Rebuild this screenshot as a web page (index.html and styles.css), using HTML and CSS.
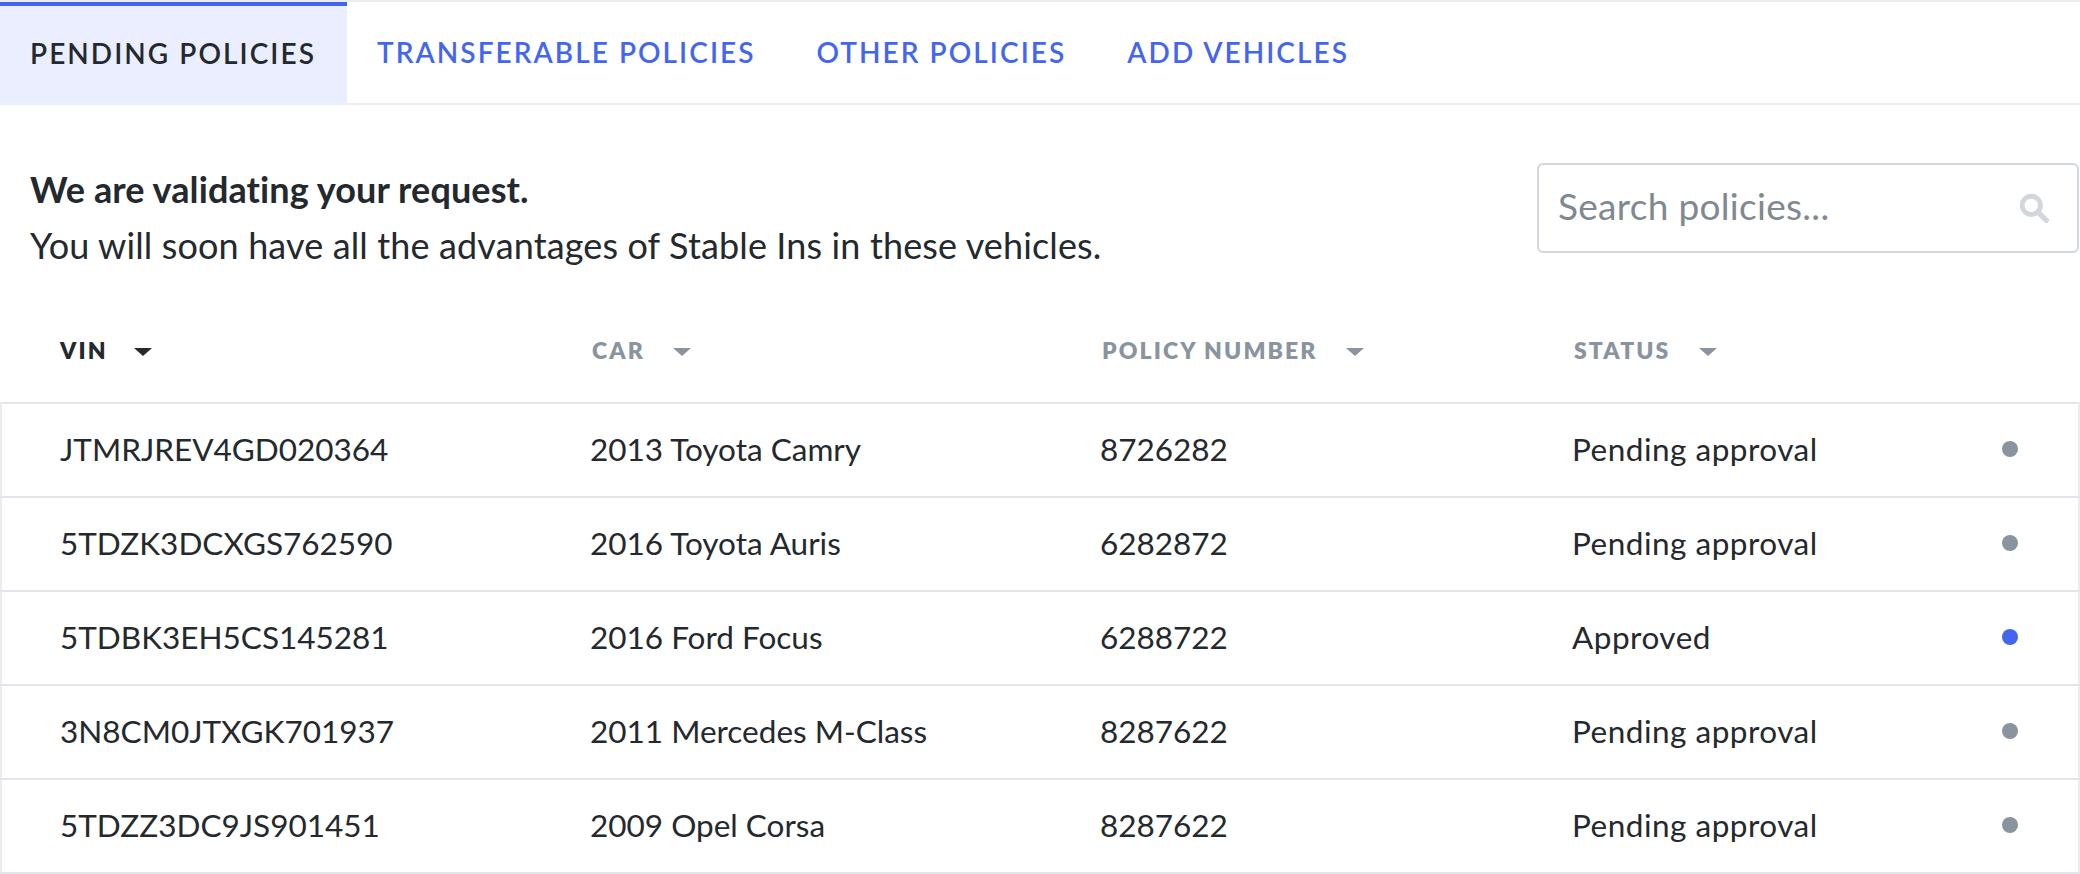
FILE: index.html
```html
<!DOCTYPE html>
<html lang="en">
<head>
  <meta charset="UTF-8" />
  <meta name="viewport" content="width=device-width, initial-scale=1.0" />
  <title>Pending Policies</title>
  <link rel="stylesheet" href="styles.css">
</head>
<body>
  <nav class="tabs">
    <a class="tab active" href="#">PENDING POLICIES</a>
    <a class="tab" href="#">TRANSFERABLE POLICIES</a>
    <a class="tab" href="#">OTHER POLICIES</a>
    <a class="tab" href="#">ADD VEHICLES</a>
  </nav>

  <section class="intro">
    <div class="intro-text">
      <h2>We are validating your request.</h2>
      <p>You will soon have all the advantages of Stable Ins in these vehicles.</p>
    </div>
    <div class="search">
      <span class="placeholder">Search policies...</span>
      <svg width="30" height="30" viewBox="0 0 28 28" fill="none" stroke="#d1d7dd">
        <circle cx="11.5" cy="11.5" r="8.5" stroke-width="4.5" />
        <path d="M18 18l7.5 7.5" stroke-width="5" stroke-linecap="round" />
      </svg>
    </div>
  </section>

  <table class="policies">
    <colgroup>
      <col class="col-vin">
      <col class="col-car">
      <col class="col-number">
      <col class="col-status">
      <col>
    </colgroup>
    <thead>
      <tr>
        <th class="sorted">VIN <span class="caret"></span></th>
        <th>CAR <span class="caret"></span></th>
        <th>POLICY NUMBER <span class="caret"></span></th>
        <th colspan="2">STATUS <span class="caret"></span></th>
      </tr>
    </thead>
    <tbody>
      <tr>
        <td>JTMRJREV4GD020364</td>
        <td>2013 Toyota Camry</td>
        <td>8726282</td>
        <td class="status">Pending approval</td>
        <td><span class="dot"></span></td>
      </tr>
      <tr>
        <td>5TDZK3DCXGS762590</td>
        <td>2016 Toyota Auris</td>
        <td>6282872</td>
        <td class="status">Pending approval</td>
        <td><span class="dot"></span></td>
      </tr>
      <tr>
        <td>5TDBK3EH5CS145281</td>
        <td>2016 Ford Focus</td>
        <td>6288722</td>
        <td class="status">Approved</td>
        <td><span class="dot approved"></span></td>
      </tr>
      <tr>
        <td>3N8CM0JTXGK701937</td>
        <td>2011 Mercedes M-Class</td>
        <td>8287622</td>
        <td class="status">Pending approval</td>
        <td><span class="dot"></span></td>
      </tr>
      <tr>
        <td>5TDZZ3DC9JS901451</td>
        <td>2009 Opel Corsa</td>
        <td>8287622</td>
        <td class="status">Pending approval</td>
        <td><span class="dot"></span></td>
      </tr>
    </tbody>
  </table>
</body>
</html>
```

FILE: styles.css
```css
body {
  margin: 0;
  font-family: Lato, "Liberation Sans", sans-serif;
  color: #24292e;
  background: white;
}
.tabs {
  display: flex;
  height: 101px;
  border-top: 2px solid #e9edf1;
  border-bottom: 2px solid #e9edf1;
}
.tab {
  display: flex;
  align-items: center;
  padding: 0 31px 5px 30px;
  font-size: 28px;
  font-weight: 600;
  letter-spacing: 2.05px;
  color: #4466ee;
  text-decoration: none;
  border-top: 4px solid transparent;
}
.tab.active {
  color: #24292e;
  background: #ebeefe;
  border-top-color: #4466ee;
  padding-right: 31px;
  margin-bottom: -2px;
}
.intro {
  display: flex;
  justify-content: space-between;
  align-items: flex-start;
  padding: 58px 1px 0 30px;
  height: 197px;
  box-sizing: border-box;
}
.intro-text {
  padding-top: 6px;
}
h2 {
  margin: 0;
  font-size: 36px;
  line-height: 40px;
  font-weight: 700;
  letter-spacing: 0.1px;
}
.intro p {
  margin: 16px 0 0;
  font-size: 36px;
  line-height: 40px;
  letter-spacing: 0.13px;
}
.search {
  display: flex;
  justify-content: space-between;
  align-items: center;
  box-sizing: border-box;
  width: 542px;
  height: 90px;
  padding: 0 28px 0 19px;
  border: 2px solid #d1d7dd;
  border-radius: 6px;
}
.placeholder {
  padding-bottom: 6px;
  font-size: 37px;
  letter-spacing: 0.3px;
  color: #808890;
}
.policies {
  width: 100%;
  table-layout: fixed;
  border-collapse: collapse;
}
.col-vin { width: 589px; }
.col-car { width: 510px; }
.col-number { width: 472px; }
.col-status { width: 395px; }
th {
  height: 95px;
  padding: 0 0 5px 2px;
  text-align: left;
  font-size: 23px;
  font-weight: 800;
  letter-spacing: 2.1px;
  color: #8a949e;
}
th:first-child { padding-left: 59px; }
th.sorted { color: #24292e; }
.caret {
  display: inline-block;
  width: 0;
  height: 0;
  margin-left: 21px;
  vertical-align: 3px;
  border-left: 9px solid transparent;
  border-right: 9px solid transparent;
  border-top: 8px solid currentColor;
}
th.sorted .caret { margin-left: 19px; }
td {
  height: 90px;
  padding: 0 0 2px;
  font-size: 31.5px;
  border-top: 2px solid #e2e6ea;
  border-bottom: 2px solid #e2e6ea;
}
td:first-child {
  padding-left: 58px;
  border-left: 2px solid #e9edf1;
}
td:last-child {
  padding-left: 35px;
  border-right: 2px solid #e9edf1;
}
td.status {
  letter-spacing: 0.5px;
}
.dot {
  display: block;
  width: 16px;
  height: 16px;
  border-radius: 50%;
  background: #8a949e;
}
.dot.approved { background: #4466ee; }
```
